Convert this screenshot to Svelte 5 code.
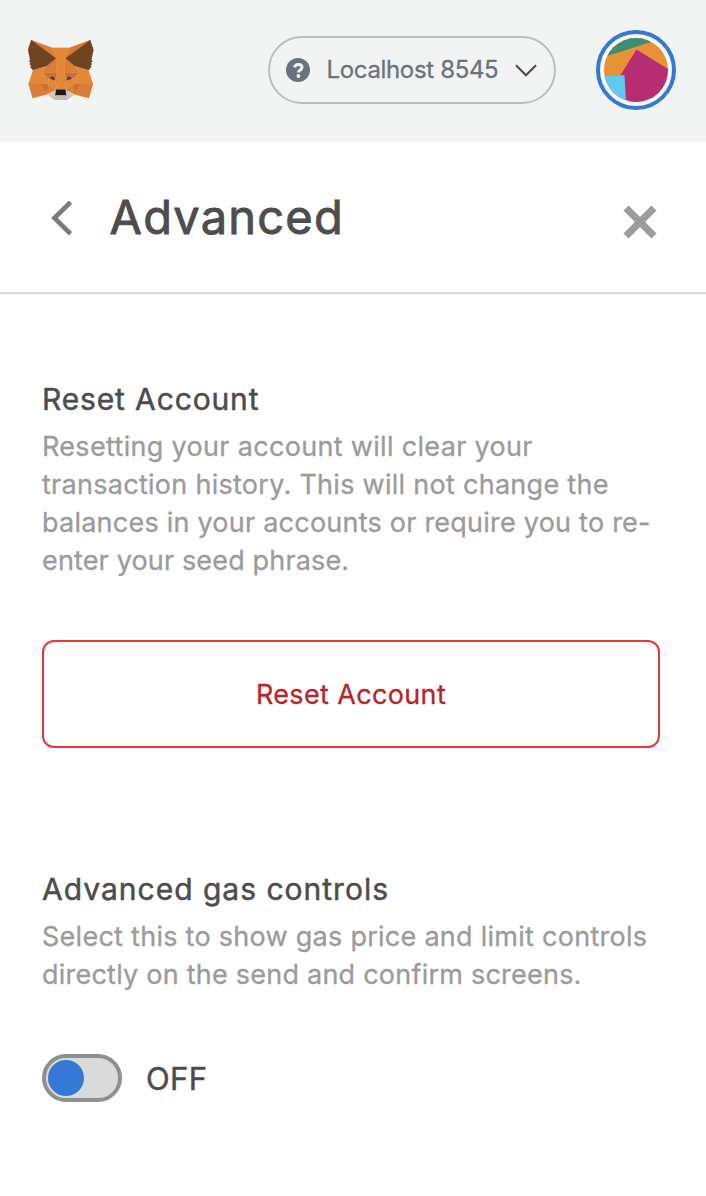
<script>
  let gasControls = $state(false);

  const resetLines = [
    { text: 'Resetting your account will clear your', spacing: 0.32 },
    { text: 'transaction history. This will not change the', spacing: 0.28 },
    { text: 'balances in your accounts or require you to re-', spacing: 0.23 },
    { text: 'enter your seed phrase.', spacing: 0.15 }
  ];
  const gasLines = [
    { text: 'Select this to show gas price and limit controls', spacing: 0.27 },
    { text: 'directly on the send and confirm screens.', spacing: 0.23 }
  ];

  const fox = [
    ['#da7a30', '274.1,35.5 174.6,109.4 193,65.8'],
    ['#dc7d33', '44.4,35.5 143.1,110.1 125.6,65.8'],
    ['#da7d36', '238.3,206.8 211.8,247.4 268.5,263 284.8,207.7'],
    ['#da7d36', '33.9,207.7 50.1,263 106.8,247.4 80.3,206.8'],
    ['#dc7d33', '103.6,138.2 87.8,162.1 144.1,164.6 142.1,104.1'],
    ['#dc7d33', '214.9,138.2 175.9,103.4 174.6,164.6 230.8,162.1'],
    ['#dc7d33', '106.8,247.4 140.6,230.9 111.4,208.1'],
    ['#dc7d33', '177.9,230.9 211.8,247.4 207.1,208.1'],
    ['#d8c7bd', '211.8,247.4 177.9,230.9 180.6,253 180.3,262.3'],
    ['#d8c7bd', '106.8,247.4 138.3,262.3 138.1,253 140.6,230.9'],
    ['#cb7032', '106.8,247.4 111.6,206.8 80.3,207.7'],
    ['#cb7032', '207,206.8 211.8,247.4 238.3,207.7'],
    ['#cb7032', '230.8,162.1 174.6,164.6 179.8,193.5 208.1,185.2'],
    ['#cb7032', '110.6,185.2 138.8,193.5 144.1,164.6 87.8,162.1'],
    ['#dd7e34', '87.8,162.1 111.4,208.1 110.6,185.2'],
    ['#dd7e34', '208.1,185.2 207.1,208.1 230.8,162.1'],
    ['#dd7e34', '144.1,164.6 138.8,193.5 145.4,227.6 146.9,182.7'],
    ['#dd7e34', '174.6,164.6 171.9,182.6 173.1,227.6 179.8,193.5'],
    ['#e48737', '179.8,193.5 173.1,227.6 177.9,230.9 207.1,208.1 208.1,185.2'],
    ['#e48737', '110.6,185.2 111.4,208.1 140.6,230.9 145.4,227.6 138.8,193.5'],
    ['#3c424b', '137,192.5 117,187 122,180 131,179'],
    ['#3c424b', '181.6,192.5 201.6,187 196.6,180 187.6,179'],
    ['#c9b8ad', '180.3,262.3 180.6,253 178.1,250.8 140.4,250.8 138.1,253 138.3,262.3 106.8,247.4 117.8,256.4 140.1,271.9 178.4,271.9 200.8,256.4 211.8,247.4'],
    ['#181818', '177.9,230.9 173.1,227.6 145.4,227.6 140.6,230.9 138.1,253 140.4,250.8 178.1,250.8 180.6,253'],
    ['#704322', '278.3,114.2 286.8,73.4 274.1,35.5 177.9,106.9 214.9,138.2 267.2,153.5 278.8,140 273.8,136.4 281.8,129.1 275.6,124.3 283.6,118.2'],
    ['#704322', '31.8,73.4 40.3,114.2 34.9,118.2 42.9,124.3 36.8,129.1 44.8,136.4 39.8,140 51.3,153.5 103.6,138.2 140.6,106.9 44.4,35.5'],
    ['#e48737', '267.2,153.5 214.9,138.2 230.8,162.1 207.1,208.1 238.3,207.7 284.8,207.7'],
    ['#e48737', '103.6,138.2 51.3,153.5 33.9,207.7 80.3,207.7 111.4,208.1 87.8,162.1'],
    ['#e48737', '174.6,164.6 177.9,106.9 193.1,65.8 125.6,65.8 140.6,106.9 144.1,164.6 145.3,182.8 145.4,227.6 173.1,227.6 173.3,182.8']
  ];
</script>

<div class="app">
  <header class="topbar">
    <svg class="fox" viewBox="31.8 35.5 255 236.4" preserveAspectRatio="none">
      {#each fox as [fill, points]}
        <polygon {points} {fill} stroke={fill} stroke-width="0.8" stroke-linejoin="round" />
      {/each}
    </svg>
    <button class="network">
      <svg class="help" viewBox="0 0 24 24">
        <circle cx="12" cy="12" r="12" fill="#6a737d" />
        <path d="M8.300 9.300C9 7.300 10.400 6.500 12.300 6.500c2.200 0 3.700 1.100 3.700 2.900 0 2.600-3.500 2.500-3.500 5.200" fill="none" stroke="#f2f4f4" stroke-width="3" />
        <circle cx="12.4" cy="18" r="1.9" fill="#f2f4f4" />
      </svg>
      <span class="network-name">Localhost 8545</span>
      <svg class="down" viewBox="0 0 22 13"><path d="M1 1.2 11 11.2 21 1.2" fill="none" stroke="#4d4d4d" stroke-width="2.1" /></svg>
    </button>
    <button class="account" aria-label="Account">
      <svg viewBox="0 0 64 64">
        <clipPath id="disc"><circle cx="32" cy="32" r="32" /></clipPath>
        <g clip-path="url(#disc)">
          <rect width="64" height="64" fill="#e89135" />
          <path d="M0 19 50 3V0H0Z" fill="#3f8d71" />
          <path d="M0 38H21L23 64H0Z" fill="#5fc9ee" />
          <path d="M32.500 11.500 64 31V64H22L20.500 37H16.500Z" fill="#b82c74" />
        </g>
      </svg>
    </button>
  </header>

  <div class="heading">
    <svg class="back" viewBox="0 0 21 36"><path d="M19.500 2.300 3.500 18 19.500 33.700" fill="none" stroke="#7b7b7b" stroke-width="4.700" /></svg>
    <h1>Advanced</h1>
    <svg class="close" viewBox="0 0 34 34"><path d="M3 3 31 31M31 3 3 31" fill="none" stroke="#9b9b9b" stroke-width="7.200" /></svg>
  </div>

  <main>
    <section>
      <h2 class="reset-title">Reset Account</h2>
      <p>
        {#each resetLines as line}
          <span style:letter-spacing="{line.spacing}px">{line.text}</span>
        {/each}
      </p>
      <button class="reset">Reset Account</button>
    </section>

    <section>
      <h2 class="gas-title">Advanced gas controls</h2>
      <p>
        {#each gasLines as line}
          <span style:letter-spacing="{line.spacing}px">{line.text}</span>
        {/each}
      </p>
      <div class="toggle-row">
        <button class="toggle" class:on={gasControls} aria-label="Advanced gas controls" onclick={() => (gasControls = !gasControls)}>
          <span class="knob"></span>
        </button>
        <span class="state">{gasControls ? 'ON' : 'OFF'}</span>
      </div>
    </section>
  </main>
</div>

<style>
  :global(body) { background: #fff; }
  .app {
    box-sizing: border-box;
    width: 706px;
    height: 1196px;
    background: #fff;
    color: #4d4d4d;
    font-family: Inter, sans-serif;
    -webkit-text-stroke: 0.3px currentColor;
    overflow: hidden;
  }
  button { font: inherit; box-sizing: border-box; padding: 0; cursor: pointer; }
  svg { display: block; flex: none; }
  .topbar {
    box-sizing: border-box;
    height: 142px;
    padding: 0 30px 2px 28px;
    display: flex;
    align-items: center;
    background: #f2f4f4;
  }
  .fox { width: 65.5px; height: 60.5px; margin-right: auto; }
  .network {
    display: flex;
    align-items: center;
    width: 288px;
    height: 68px;
    padding: 0 17px 0 16px;
    border: 2px solid #bbbec0;
    border-radius: 34px;
    background: transparent;
    margin-right: 40px;
  }
  .help { width: 24px; height: 24px; margin-right: 16px; }
  .network-name { padding: 0 0 2px 0.5px; font-size: 24px; letter-spacing: -0.34px; color: #6a737d; white-space: nowrap; }
  .down { width: 22px; height: 13px; margin-left: auto; }
  .account {
    width: 80px;
    height: 80px;
    padding: 4px;
    border: 4px solid #3579d4;
    border-radius: 50%;
    background: #fafafa;
  }
  .account svg { width: 64px; height: 64px; }
  .heading {
    box-sizing: border-box;
    height: 152px;
    display: flex;
    align-items: center;
    padding: 0 49px 0 51px;
    border-bottom: 2px solid #d8d8d8;
  }
  .back { width: 21px; height: 36px; margin: 2px 37.5px 0 0; }
  h1 { margin: 0; font-size: 47px; font-weight: 400; line-height: 60px; letter-spacing: 1.2px; -webkit-text-stroke-width: 0.9px; }
  .close { width: 34px; height: 34px; margin: 10px 0 0 auto; }
  main {
    padding: 85px 46px 0 42px;
    display: flex;
    flex-direction: column;
    gap: 121px;
  }
  h2 { margin: 0 0 9px; font-size: 30px; font-weight: 400; line-height: 40px; -webkit-text-stroke-width: 0.5px; }
  .reset-title { letter-spacing: 0.86px; }
  .gas-title { letter-spacing: 1px; }
  p { margin: 0 0 60px; font-size: 27px; line-height: 38px; color: #9b9b9b; }
  p span { display: block; white-space: nowrap; }
  .reset {
    display: block;
    width: 618px;
    height: 108px;
    border: 2px solid #e93538;
    border-radius: 12px;
    background: #fff;
    color: #b92428;
    font-size: 27px;
    letter-spacing: 0.36px;
  }
  .toggle-row { display: flex; align-items: center; gap: 24px; }
  .toggle {
    width: 80px;
    height: 48px;
    padding: 0 2px;
    display: flex;
    align-items: center;
    border: 4px solid #8f8f8f;
    border-radius: 24px;
    background: #dadada;
  }
  .toggle.on { justify-content: flex-end; }
  .knob { width: 36px; height: 36px; border-radius: 50%; background: #3579d4; }
  .state { font-size: 31px; line-height: 40px; letter-spacing: 0.4px; padding-top: 1px; -webkit-text-stroke-width: 0.5px; }
</style>
